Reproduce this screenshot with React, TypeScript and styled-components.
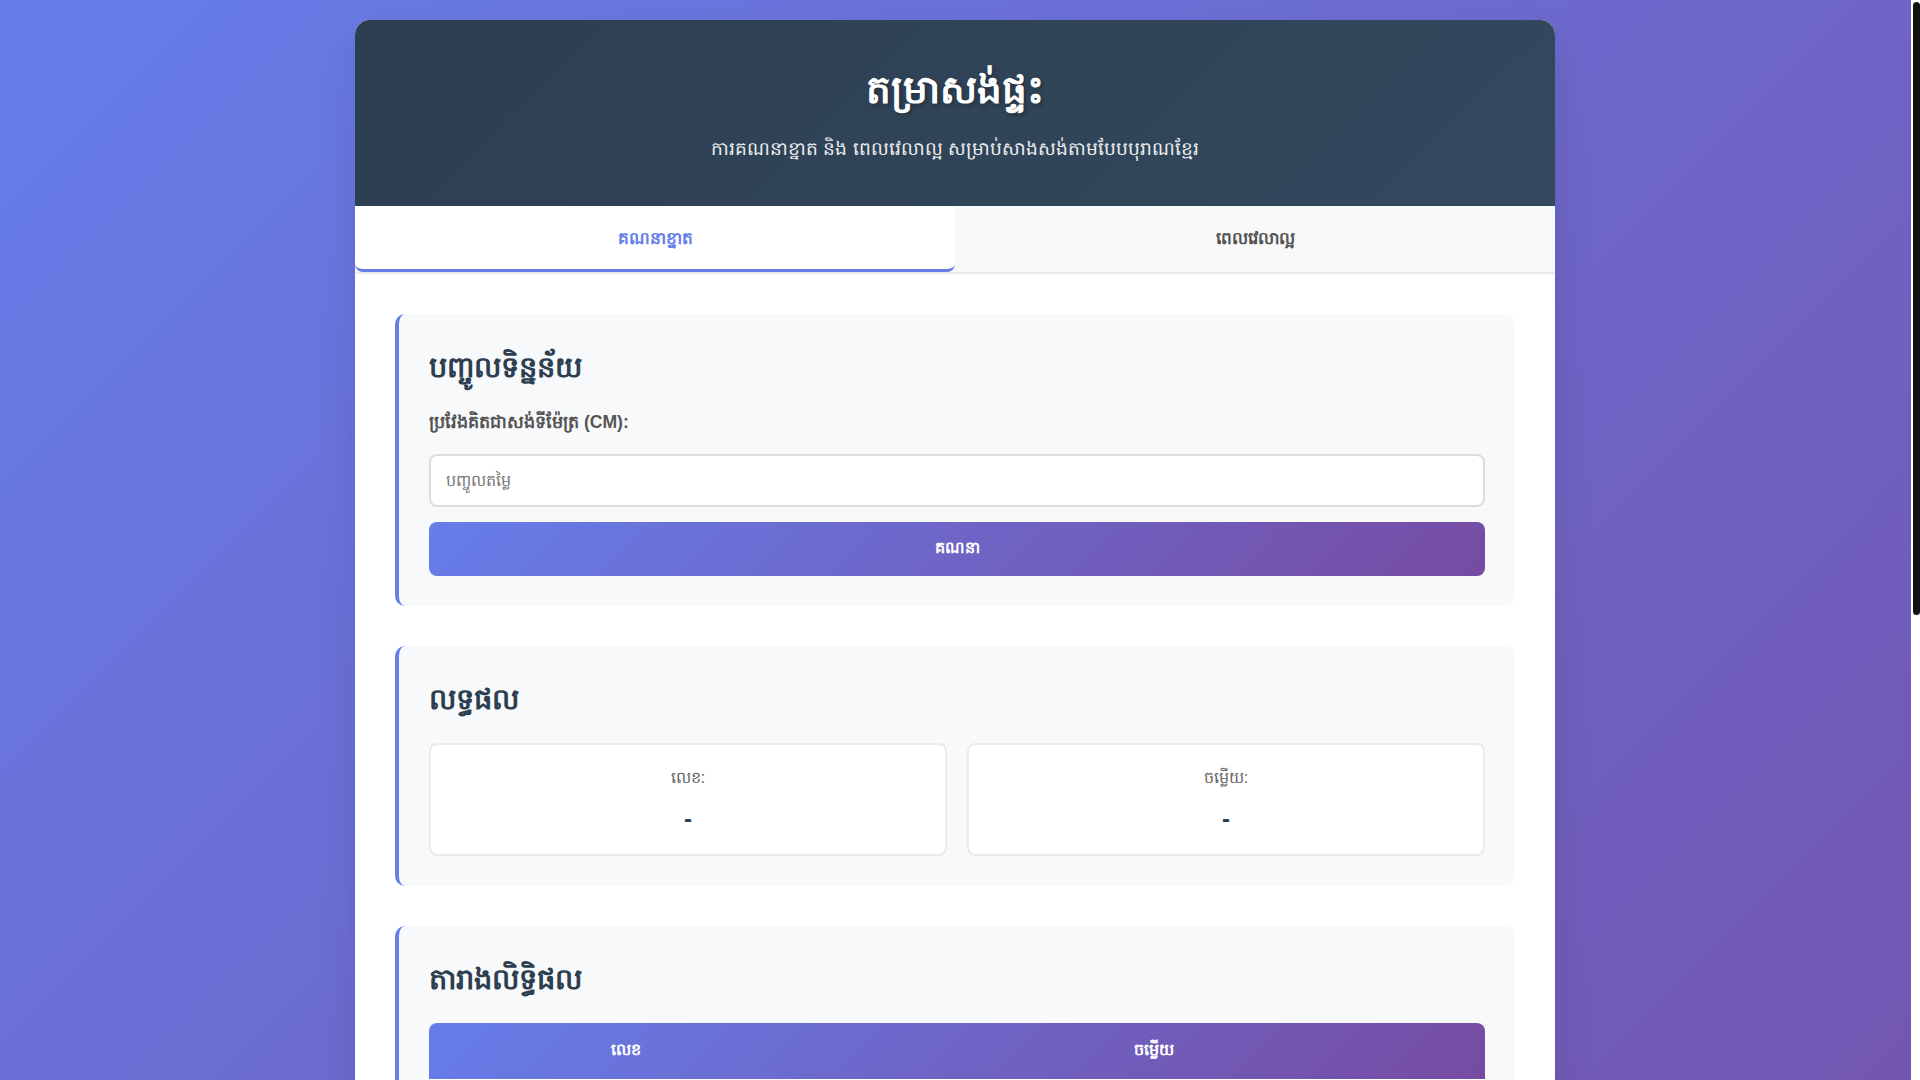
import React, { useEffect, useState } from "react";
import styled, { createGlobalStyle } from "styled-components";

const GlobalStyle = createGlobalStyle`
  * {
    margin: 0;
    padding: 0;
    box-sizing: border-box;
  }

  body {
    font-family: "Liberation Sans", Arial, sans-serif;
    background: linear-gradient(135deg, #667eea 0%, #764ba2 100%);
    min-height: 100vh;
    padding: 20px 30px 20px 20px;
  }
`;

const ScrollTrack = styled.div`
  position: fixed;
  top: 0;
  right: 0;
  bottom: 0;
  width: 9px;
  background: #ffffff;
  z-index: 10;
`;

const ScrollThumb = styled.div`
  margin: 2px 0 0 2px;
  width: 7px;
  background: #111;
  border-radius: 4px;
`;

const Container = styled.div`
  max-width: 1200px;
  margin: 0 auto;
  background: white;
  border-radius: 15px;
  box-shadow: 0 20px 40px rgba(0, 0, 0, 0.1);
  overflow: hidden;
`;

const Header = styled.header`
  background: linear-gradient(135deg, #2c3e50 0%, #34495e 100%);
  color: white;
  padding: 45px 40px 42px;
  text-align: center;

  h1 {
    font-size: 39px;
    margin-bottom: 15px;
    text-shadow: 2px 2px 4px rgba(0, 0, 0, 0.3);
  }

  p {
    font-size: 18.7px;
    opacity: 0.9;
  }
`;

const TabBar = styled.div`
  display: flex;
  background: #f8f9fa;
  border-bottom: 2px solid #e9ecef;
`;

const Tab = styled.button<{ $active?: boolean }>`
  flex: 1;
  padding: 21px 20px 17px;
  border: none;
  border-radius: 0 0 8px 8px;
  border-bottom: 3px solid ${p => (p.$active ? "#667eea" : "transparent")};
  background: ${p => (p.$active ? "white" : "transparent")};
  color: ${p => (p.$active ? "#667eea" : "#555")};
  font-family: inherit;
  font-size: 17px;
  font-weight: 600;
  cursor: pointer;
`;

const Content = styled.main`
  padding: 40px;
`;

const Section = styled.section`
  background: #f8f9fa;
  padding: 30px;
  border-radius: 10px;
  border-left: 4px solid #667eea;
  margin-bottom: 40px;

  h2 {
    color: #2c3e50;
    font-size: 1.8em;
    padding-top: 5px;
    margin-bottom: 20px;
  }
`;

const FormGroup = styled.div`
  margin-bottom: 15px;

  label {
    display: block;
    margin-bottom: 17px;
    font-size: 1.1em;
    font-weight: bold;
    color: #555;
  }
`;

const Input = styled.input`
  width: 100%;
  padding: 16px 15px 15px;
  border: 2px solid #ddd;
  border-radius: 8px;
  font-family: inherit;
  font-size: 16px;
  background: white;

  &::placeholder {
    color: #777;
  }

  &:focus {
    outline: none;
    border-color: #667eea;
  }
`;

const Button = styled.button`
  width: 100%;
  padding: 15px;
  border: none;
  border-radius: 8px;
  background: linear-gradient(135deg, #667eea 0%, #764ba2 100%);
  color: white;
  font-family: inherit;
  font-size: 16px;
  font-weight: bold;
  cursor: pointer;
`;

const ResultGrid = styled.div`
  display: grid;
  grid-template-columns: 1fr 1fr;
  gap: 20px;
`;

const ResultItem = styled.div`
  background: white;
  padding: 22px 20px 21px;
  border-radius: 8px;
  border: 2px solid #e9ecef;
  text-align: center;
`;

const ResultLabel = styled.div`
  color: #666;
  font-weight: 500;
  margin-bottom: 14px;
`;

const ResultValue = styled.div`
  color: #2c3e50;
  font-size: 1.5em;
  font-weight: bold;
`;

const TableWrap = styled.div`
  border-radius: 8px;
  overflow: hidden;
  background: white;
`;

const Table = styled.table`
  width: 100%;
  border-collapse: collapse;

  thead {
    background: linear-gradient(135deg, #667eea 0%, #764ba2 100%);
  }

  th {
    color: white;
    padding: 16px 15px;
    text-align: center;
    font-weight: bold;
  }

  th:first-child {
    width: 37.3%;
  }

  td {
    padding: 12px 15px;
    text-align: center;
    color: #333;
    border-bottom: 1px solid #e9ecef;
  }

  tbody tr:nth-child(even) {
    background: #f8f9fa;
  }
`;

const rows: [string, string][] = [
  ["១", "ល្អ - មានលាភ"],
  ["២", "អាក្រក់ - ខាតបង់"],
  ["៣", "ល្អ - សុខសប្បាយ"],
  ["៤", "អាក្រក់ - ជំងឺ"],
  ["៥", "ល្អ - មានបុណ្យ"],
  ["៦", "អាក្រក់ - ជម្លោះ"],
  ["៧", "ល្អ - រីកចម្រើន"],
  ["៨", "អាក្រក់ - បាត់បង់"],
  ["៩", "ល្អ - មានកិត្តិយស"],
  ["១០", "អាក្រក់ - ទុក្ខព្រួយ"],
  ["១១", "ល្អ - សម្បូរសប្បាយ"],
  ["១២", "អាក្រក់ - ក្រីក្រ"],
  ["១៣", "ល្អ - មានសិរីមង្គល"],
  ["១៤", "អាក្រក់ - គ្រោះថ្នាក់"],
];

// page scroll indicator, sized from the real document height
const ScrollBar = () => {
  const [thumb, setThumb] = useState(0);

  useEffect(() => {
    const measure = () => {
      const view = window.innerHeight;
      const full = document.documentElement.scrollHeight;
      setThumb(full > view ? Math.round((view / full) * (view - 4)) : 0);
    };
    measure();
    window.addEventListener("resize", measure);
    return () => window.removeEventListener("resize", measure);
  }, []);

  if (!thumb) return null;
  return (
    <ScrollTrack>
      <ScrollThumb style={{ height: thumb }} />
    </ScrollTrack>
  );
};

export default function App() {
  const [tab, setTab] = useState(0);
  const [value, setValue] = useState("");

  return (
    <>
      <GlobalStyle />
      <ScrollBar />
      <Container>
        <Header>
          <h1>តម្រាសង់ផ្ទះ</h1>
          <p>ការគណនាខ្នាត និង ពេលវេលាល្អ សម្រាប់សាងសង់តាមបែបបុរាណខ្មែរ</p>
        </Header>

        <TabBar>
          <Tab $active={tab === 0} onClick={() => setTab(0)}>គណនាខ្នាត</Tab>
          <Tab $active={tab === 1} onClick={() => setTab(1)}>ពេលវេលាល្អ</Tab>
        </TabBar>

        <Content>
          <Section>
            <h2>បញ្ចូលទិន្នន័យ</h2>
            <FormGroup>
              <label>ប្រវែងគិតជាសង់ទីម៉ែត្រ (CM):</label>
              <Input
                type="number"
                placeholder="បញ្ចូលតម្លៃ"
                value={value}
                onChange={e => setValue(e.target.value)}
              />
            </FormGroup>
            <Button>គណនា</Button>
          </Section>

          <Section>
            <h2>លទ្ធផល</h2>
            <ResultGrid>
              <ResultItem>
                <ResultLabel>លេខ:</ResultLabel>
                <ResultValue>-</ResultValue>
              </ResultItem>
              <ResultItem>
                <ResultLabel>ចម្លើយ:</ResultLabel>
                <ResultValue>-</ResultValue>
              </ResultItem>
            </ResultGrid>
          </Section>

          <Section>
            <h2>តារាងលិទ្ធិផល</h2>
            <TableWrap>
              <Table>
                <thead>
                  <tr>
                    <th>លេខ</th>
                    <th>ចម្លើយ</th>
                  </tr>
                </thead>
                <tbody>
                  {rows.map(([n, a]) => (
                    <tr key={n}>
                      <td>{n}</td>
                      <td>{a}</td>
                    </tr>
                  ))}
                </tbody>
              </Table>
            </TableWrap>
          </Section>
        </Content>
      </Container>
    </>
  );
}
